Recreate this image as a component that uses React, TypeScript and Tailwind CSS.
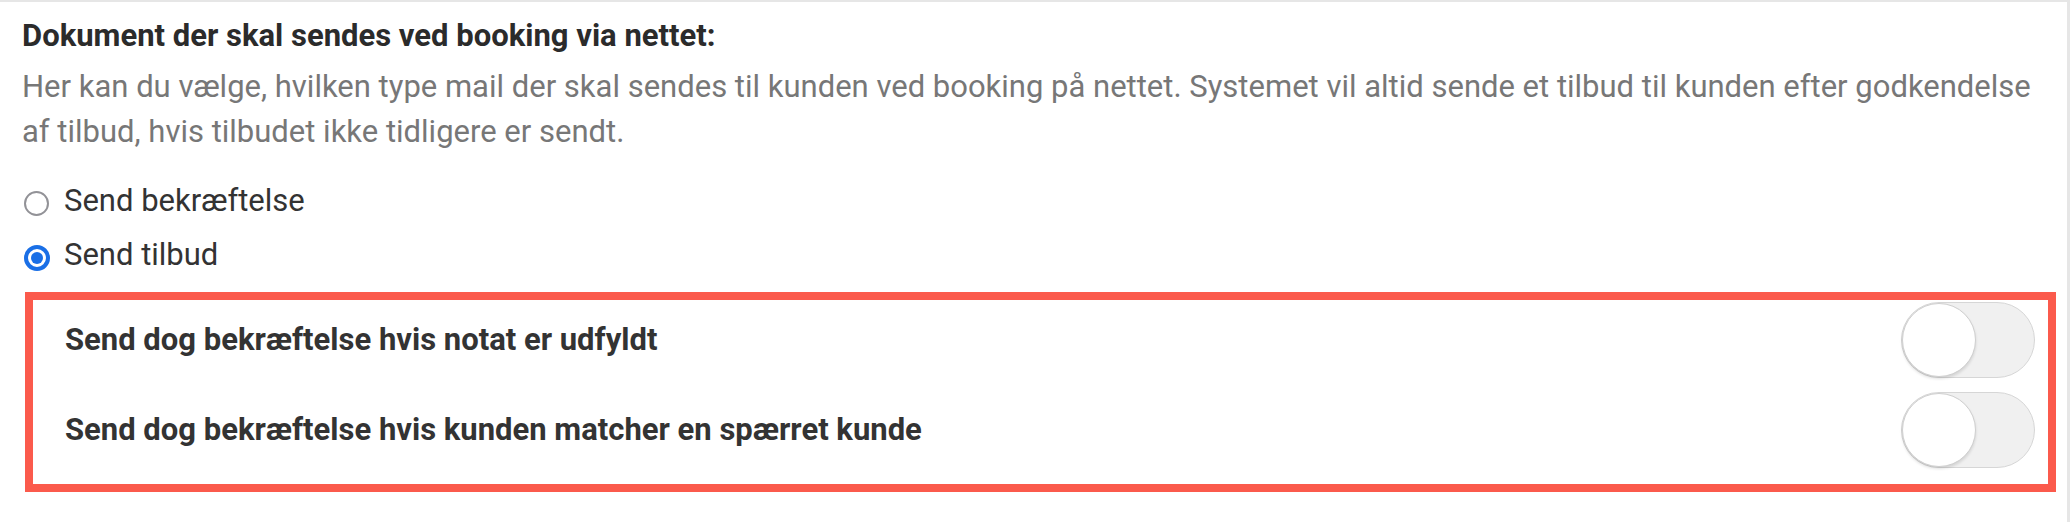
import { useState } from "react";

function Radio({ checked }: { checked: boolean }) {
  if (checked) {
    return (
      <span className="flex h-[26px] w-[26px] shrink-0 items-center justify-center rounded-full border-[4px] border-[#1a6fe6] bg-white">
        <span className="h-[12px] w-[12px] rounded-full bg-[#1a6fe6]" />
      </span>
    );
  }
  return <span className="h-[25px] w-[25px] shrink-0 rounded-full border-2 border-[#929297] bg-white" />;
}

function Toggle({ on, onClick }: { on: boolean; onClick: () => void }) {
  return (
    <button
      onClick={onClick}
      className={`flex h-[76px] w-[134px] shrink-0 items-center rounded-full border border-[#d6d6d6] p-0 ${
        on ? "justify-end bg-[#34c759]" : "justify-start bg-[#f0f0f0]"
      }`}
    >
      <span className="h-[74px] w-[74px] rounded-full border border-[#cfcfcf] bg-white shadow-[0_2px_3px_rgba(0,0,0,0.12)]" />
    </button>
  );
}

export default function App() {
  const [choice, setChoice] = useState<"confirm" | "offer">("offer");
  const [notat, setNotat] = useState(false);
  const [blocked, setBlocked] = useState(false);

  return (
    <div className="h-[522px] w-[2070px] overflow-hidden bg-white font-['Roboto','Liberation_Sans',sans-serif]">
      <div className="h-full w-[2070px] border-t-2 border-r-[3px] border-[#e6e6e6] pl-[22px] pt-[16px]">
        <h2 className="text-[31px] font-bold leading-[36px] text-[#2b2b2b]">
          Dokument der skal sendes ved booking via nettet:
        </h2>
        <p className="mt-[10px] text-[31px] leading-[45px] text-[#777777]">
          Her kan du vælge, hvilken type mail der skal sendes til kunden ved booking på nettet. Systemet vil altid sende et tilbud til kunden efter godkendelse
          <br />
          af tilbud, hvis tilbudet ikke tidligere er sendt.
        </p>

        <div className="ml-[2px] mt-[20px] flex flex-col">
          <label className="flex h-[54px] items-center gap-[15px]" onClick={() => setChoice("confirm")}>
            <span className="mt-[4px] flex">
              <Radio checked={choice === "confirm"} />
            </span>
            <span className="text-[31px] leading-[36px] text-[#333333]">Send bekræftelse</span>
          </label>
          <label className="flex h-[54px] items-center gap-[14px]" onClick={() => setChoice("offer")}>
            <span className="mt-[6px] flex">
              <Radio checked={choice === "offer"} />
            </span>
            <span className="text-[31px] leading-[36px] text-[#333333]">Send tilbud</span>
          </label>
        </div>

        <div className="ml-[3px] mr-[11px] mt-[10px] flex flex-col gap-[14px] border-[8px] border-[#fb5a4c] pb-[16px] pl-[32px] pr-[13px] pt-[2px]">
          <div className="flex items-center justify-between">
            <span className="text-[31px] font-bold leading-[36px] text-[#333333]">Send dog bekræftelse hvis notat er udfyldt</span>
            <Toggle on={notat} onClick={() => setNotat(!notat)} />
          </div>
          <div className="flex items-center justify-between">
            <span className="text-[31px] font-bold leading-[36px] text-[#333333]">
              Send dog bekræftelse hvis kunden matcher en spærret kunde
            </span>
            <Toggle on={blocked} onClick={() => setBlocked(!blocked)} />
          </div>
        </div>
      </div>
    </div>
  );
}
